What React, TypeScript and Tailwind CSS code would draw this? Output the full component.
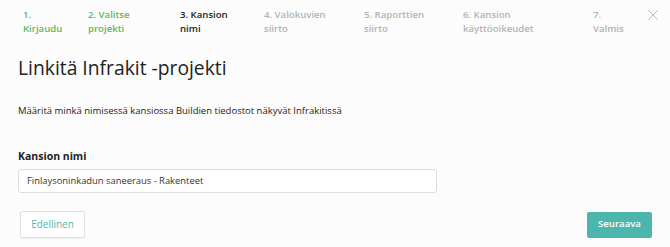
import { X } from "lucide-react";

const steps = [
  { n: "1.", label: "Kirjaudu", state: "done", w: "w-[65px]" },
  { n: "2. Valitse", label: "projekti", state: "done", w: "w-[92px]" },
  { n: "3. Kansion", label: "nimi", state: "active", w: "w-[84px]" },
  { n: "4. Valokuvien", label: "siirto", state: "todo", w: "w-[100px]" },
  { n: "5. Raporttien", label: "siirto", state: "todo", w: "w-[99px]" },
  { n: "6. Kansion", label: "käyttöoikeudet", state: "todo", w: "w-[130px]" },
  { n: "7.", label: "Valmis", state: "todo", w: "w-[50px]" },
];

const stepColor: Record<string, string> = {
  done: "text-[#5cb85c]",
  active: "text-[#222]",
  todo: "text-[#b3b3b3]",
};

export default function App() {
  return (
    <div
      className="w-[670px] h-[247px] bg-[#fcfcfc] relative"
      style={{ fontFamily: '"Open Sans", "Noto Sans", sans-serif' }}
    >
      {/* Stepper */}
      <div className="flex pl-[23px] pt-[8px]">
        {steps.map((s) => (
          <div
            key={s.n}
            className={`${s.w} text-[9.6px] font-semibold leading-[14px] ${stepColor[s.state]}`}
          >
            <div>{s.n}</div>
            <div>{s.label}</div>
          </div>
        ))}
      </div>
      <button className="absolute right-[8px] top-[6px] text-[#b3b3b3]" aria-label="Sulje">
        <X size={18} strokeWidth={1.2} />
      </button>

      <div className="px-[18px]">
        <h1 className="text-[19.3px] leading-[28px] text-[#222] mt-[18px]">Linkitä Infrakit -projekti</h1>
        <p className="text-[9.5px] leading-[16px] text-[#222] mt-[21px]">
          Määritä minkä nimisessä kansiossa Buildien tiedostot näkyvät Infrakitissä
        </p>

        <label className="block text-[10.5px] font-bold leading-[16px] text-[#222] mt-[29px]">
          Kansion nimi
        </label>
        <div className="mt-[5px] w-[419px] h-[24px] border border-[#dcdcdc] rounded-[3px] bg-white flex items-center px-[8px] text-[9.4px] text-[#333]">
          Finlaysoninkadun saneeraus - Rakenteet
        </div>

        <div className="flex justify-between items-center mt-[18px]">
          <button className="ml-[2px] w-[65px] h-[27px] border border-[#e0e0e0] rounded-[2px] bg-white shadow-[0_1px_1px_rgba(0,0,0,0.05)] text-[10px] text-[#4db6ac]">
            Edellinen
          </button>
          <button className="w-[65px] h-[26px] rounded-[2px] bg-[#4db6ac] text-white text-[9.6px] font-semibold">
            Seuraava
          </button>
        </div>
      </div>
    </div>
  );
}
